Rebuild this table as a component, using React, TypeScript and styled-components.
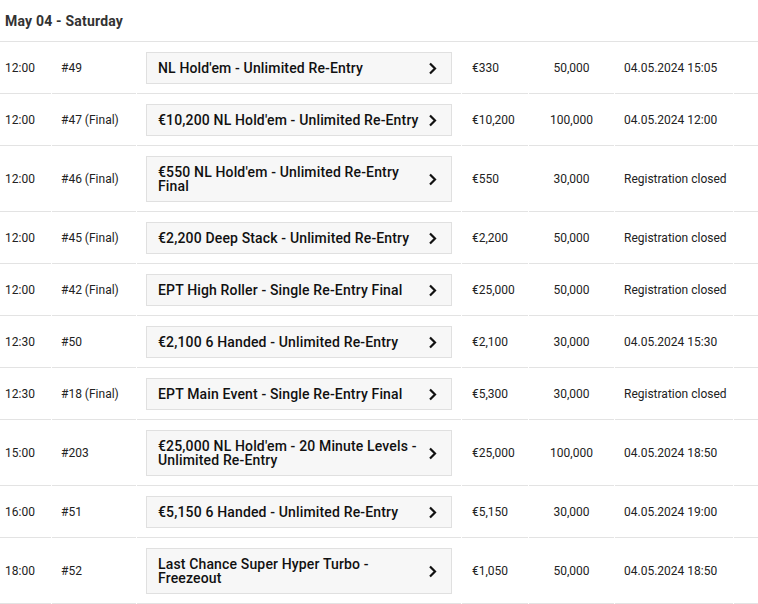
import React from 'react';
import styled, { createGlobalStyle } from 'styled-components';

const GlobalStyle = createGlobalStyle`
  body {
    margin: 0;
    background: #fff;
    font-family: Roboto, "Liberation Sans", Arial, sans-serif;
    color: #222;
  }
`;

const Schedule = styled.section`
  width: 758px;
`;

const DayHeader = styled.h2`
  margin: 0;
  height: 41px;
  display: flex;
  align-items: center;
  padding: 0 5px;
  font-size: 14px;
  font-weight: 700;
  letter-spacing: 0.2px;
  color: #333;
  border-bottom: 1px solid #e3e3e3;
`;

const Row = styled.div`
  display: grid;
  grid-template-columns: 51px 84px 324px 66px 85px 118px 24px;
  column-gap: 1px;
`;

const Cell = styled.div<{ $align?: 'left' | 'center'; $pad?: number }>`
  box-sizing: border-box;
  display: flex;
  align-items: center;
  justify-content: ${(p) => (p.$align === 'center' ? 'center' : 'flex-start')};
  padding: 10px ${(p) => p.$pad ?? 9}px 9px;
  border-bottom: 1px solid #e3e3e3;
  font-size: 12px;
  color: #222;
  white-space: nowrap;
  min-height: 52px;
`;

const EventButton = styled.button`
  box-sizing: border-box;
  flex: 1;
  display: flex;
  align-items: center;
  gap: 5px;
  min-height: 32px;
  padding: 8px 14px 8px 11px;
  background: #f7f7f7;
  border: 1px solid #e0e0e0;
  border-radius: 0;
  font-family: inherit;
  font-size: 14px;
  font-weight: 500;
  letter-spacing: 0.15px;
  line-height: 14px;
  color: #111;
  text-align: left;
  cursor: pointer;
  white-space: normal;
`;

const EventName = styled.span`
  flex: 1;
`;

const Chevron = () => (
  <svg width="9" height="13" viewBox="0 0 9 13" style={{ flex: '0 0 auto' }}>
    <polyline points="2,1.5 7,6.5 2,11.5" fill="none" stroke="#111" strokeWidth="2.2" />
  </svg>
);

type Event = {
  time: string;
  no: string;
  name: string;
  buyIn: string;
  stack: string;
  status: string;
};

const events: Event[] = [
  { time: '12:00', no: '#49', name: "NL Hold'em - Unlimited Re-Entry", buyIn: '€330', stack: '50,000', status: '04.05.2024 15:05' },
  { time: '12:00', no: '#47 (Final)', name: "€10,200 NL Hold'em - Unlimited Re-Entry", buyIn: '€10,200', stack: '100,000', status: '04.05.2024 12:00' },
  { time: '12:00', no: '#46 (Final)', name: "€550 NL Hold'em - Unlimited Re-Entry Final", buyIn: '€550', stack: '30,000', status: 'Registration closed' },
  { time: '12:00', no: '#45 (Final)', name: '€2,200 Deep Stack - Unlimited Re-Entry', buyIn: '€2,200', stack: '50,000', status: 'Registration closed' },
  { time: '12:00', no: '#42 (Final)', name: 'EPT High Roller - Single Re-Entry Final', buyIn: '€25,000', stack: '50,000', status: 'Registration closed' },
  { time: '12:30', no: '#50', name: '€2,100 6 Handed - Unlimited Re-Entry', buyIn: '€2,100', stack: '30,000', status: '04.05.2024 15:30' },
  { time: '12:30', no: '#18 (Final)', name: 'EPT Main Event - Single Re-Entry Final', buyIn: '€5,300', stack: '30,000', status: 'Registration closed' },
  { time: '15:00', no: '#203', name: "€25,000 NL Hold'em - 20 Minute Levels - Unlimited Re-Entry", buyIn: '€25,000', stack: '100,000', status: '04.05.2024 18:50' },
  { time: '16:00', no: '#51', name: '€5,150 6 Handed - Unlimited Re-Entry', buyIn: '€5,150', stack: '30,000', status: '04.05.2024 19:00' },
  { time: '18:00', no: '#52', name: 'Last Chance Super Hyper Turbo - Freezeout', buyIn: '€1,050', stack: '50,000', status: '04.05.2024 18:50' },
];

export default function App() {
  return (
    <>
      <GlobalStyle />
      <Schedule>
        <DayHeader>May 04 - Saturday</DayHeader>
        {events.map((e, i) => (
          <Row key={i}>
            <Cell $pad={5}>{e.time}</Cell>
            <Cell>{e.no}</Cell>
            <Cell>
              <EventButton>
                <EventName>{e.name}</EventName>
                <Chevron />
              </EventButton>
            </Cell>
            <Cell $pad={10}>{e.buyIn}</Cell>
            <Cell $align="center">{e.stack}</Cell>
            <Cell>{e.status}</Cell>
            <Cell />
          </Row>
        ))}
      </Schedule>
    </>
  );
}
